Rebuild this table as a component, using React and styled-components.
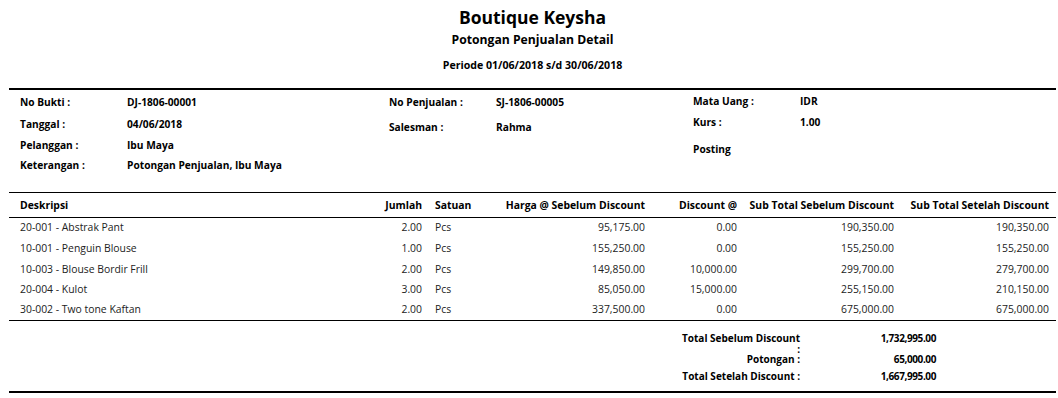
import React from 'react';
import styled, { createGlobalStyle } from 'styled-components';

const GlobalStyle = createGlobalStyle`
  body { margin: 0; background: #fff; color: #000; font-family: "Open Sans", "Noto Sans", sans-serif; }
`

const Page = styled.div`width:1058px; padding:0 2px 0 9px; box-sizing:border-box;`
const Header = styled.div`text-align:center; padding-top:5px; height:88px; box-sizing:border-box;`
const Title = styled.h1`margin:0; font-size:17.5px; line-height:24px; font-weight:700;`
const SubTitle = styled.h2`margin:0; font-size:12.2px; line-height:22px; font-weight:700;`
const Periode = styled.p`margin:4px 0 0; font-size:10.6px; line-height:20px; font-weight:700;`
const ThickLine = styled.div`height:2px; background:#000;`

const InfoGrid = styled.div`display:grid; grid-template-columns:369px 304px 1fr; padding:4px 0 0 11px; height:102px; box-sizing:border-box;`
const InfoCol = styled.div``
const Field = styled.div`display:flex; margin-top:${p => p.$gap || 0}px; font-size:10.2px; line-height:16px; font-weight:700;`
const Label = styled.span`width:107px; flex:none;`
const Value = styled.span``

const Table = styled.table`width:1047px; border-collapse:collapse; table-layout:fixed; font-size:10.4px;`
const HeadRow = styled.tr`height:25px; border-top:1px solid #000; border-bottom:1px solid #000;`
const Th = styled.th`font-weight:700; text-align:${p => p.$align || 'left'}; padding:0 ${p => p.$pr || 4}px 0 ${p => p.$pl || 0}px; white-space:nowrap;`
const Row = styled.tr`height:${p => p.$h || 20}px;`
const Td = styled.td`color:#222; text-align:${p => p.$align || 'left'}; padding:0 ${p => p.$pr || 4}px 2px ${p => p.$pl || 0}px; white-space:nowrap;`
const BodyEnd = styled.tbody`border-bottom:1px solid #000;`

const Totals = styled.div`display:grid; grid-template-columns:791px 136px; align-content:start; padding-top:12px; height:70px; box-sizing:border-box; font-weight:700;`
const TotalLabel = styled.div`text-align:right; font-size:10px; line-height:${p => p.$lh || 10}px; margin-top:${p => p.$gap || 0}px;`
const TotalValue = styled.div`text-align:right; font-size:10px; letter-spacing:-0.4px; line-height:10px; margin-top:${p => p.$gap || 0}px;`
const Colon = styled.span`display:block;`

const rows = [
  ['20-001 - Abstrak Pant', '2.00', 'Pcs', '95,175.00', '0.00', '190,350.00', '190,350.00'],
  ['10-001 - Penguin Blouse', '1.00', 'Pcs', '155,250.00', '0.00', '155,250.00', '155,250.00'],
  ['10-003 - Blouse Bordir Frill', '2.00', 'Pcs', '149,850.00', '10,000.00', '299,700.00', '279,700.00'],
  ['20-004 - Kulot', '3.00', 'Pcs', '85,050.00', '15,000.00', '255,150.00', '210,150.00'],
  ['30-002 - Two tone Kaftan', '2.00', 'Pcs', '337,500.00', '0.00', '675,000.00', '675,000.00'],
]
const rowHeights = [21, 21, 20, 21, 20]

const App = () => {
  return (
    <>
      <GlobalStyle />
      <Page>
        <Header>
          <Title>Boutique Keysha</Title>
          <SubTitle>Potongan Penjualan Detail</SubTitle>
          <Periode>Periode 01/06/2018 s/d 30/06/2018</Periode>
        </Header>
        <ThickLine />
        <InfoGrid>
          <InfoCol>
            <Field><Label>No Bukti :</Label><Value>DJ-1806-00001</Value></Field>
            <Field $gap={6}><Label>Tanggal :</Label><Value>04/06/2018</Value></Field>
            <Field $gap={5}><Label>Pelanggan :</Label><Value>Ibu Maya</Value></Field>
            <Field $gap={4}><Label>Keterangan :</Label><Value>Potongan Penjualan, Ibu Maya</Value></Field>
          </InfoCol>
          <InfoCol>
            <Field><Label>No Penjualan :</Label><Value>SJ-1806-00005</Value></Field>
            <Field $gap={9}><Label>Salesman :</Label><Value>Rahma</Value></Field>
          </InfoCol>
          <InfoCol>
            <Field $gap={-1}><Label>Mata Uang :</Label><Value>IDR</Value></Field>
            <Field $gap={5}><Label>Kurs :</Label><Value>1.00</Value></Field>
            <Field $gap={11}><Label>Posting</Label></Field>
          </InfoCol>
        </InfoGrid>
        <Table>
          <colgroup>
            <col style={{ width: 366 }} />
            <col style={{ width: 51 }} />
            <col style={{ width: 49 }} />
            <col style={{ width: 174 }} />
            <col style={{ width: 92 }} />
            <col style={{ width: 157 }} />
            <col style={{ width: 158 }} />
          </colgroup>
          <thead>
            <HeadRow>
              <Th $pl={11}>Deskripsi</Th>
              <Th $align="right">Jumlah</Th>
              <Th $pl={9}>Satuan</Th>
              <Th $align="right">Harga @ Sebelum Discount</Th>
              <Th $align="right">Discount @</Th>
              <Th $align="right">Sub Total Sebelum Discount</Th>
              <Th $align="right" $pr={7}>Sub Total Setelah Discount</Th>
            </HeadRow>
          </thead>
          <BodyEnd>
            {rows.map((r, i) => (
              <Row key={i} $h={rowHeights[i]}>
                <Td $pl={11}>{r[0]}</Td>
                <Td $align="right">{r[1]}</Td>
                <Td $pl={9}>{r[2]}</Td>
                <Td $align="right">{r[3]}</Td>
                <Td $align="right">{r[4]}</Td>
                <Td $align="right">{r[5]}</Td>
                <Td $align="right" $pr={7}>{r[6]}</Td>
              </Row>
            ))}
          </BodyEnd>
        </Table>
        <Totals>
          <TotalLabel $lh={10.5}>Total Sebelum Discount<Colon>:</Colon></TotalLabel>
          <TotalValue>1,732,995.00</TotalValue>
          <TotalLabel>Potongan :</TotalLabel>
          <TotalValue>65,000.00</TotalValue>
          <TotalLabel $gap={7}>Total Setelah Discount :</TotalLabel>
          <TotalValue $gap={7}>1,667,995.00</TotalValue>
        </Totals>
        <ThickLine />
      </Page>
    </>
  )
}

export default App;
